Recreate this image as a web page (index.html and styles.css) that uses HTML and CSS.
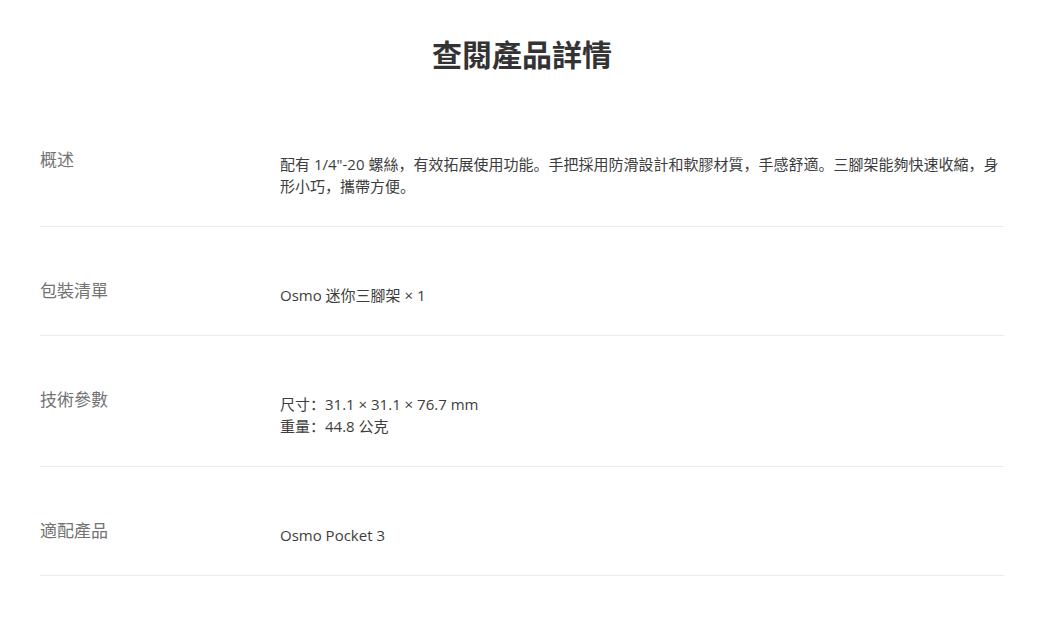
FILE: index.html
```html
<!DOCTYPE html>
<html>
<head>
  <meta charset="UTF-8" />
  <title>查閱產品詳情</title>
  <meta name="viewport" content="width=device-width, initial-scale=1.0" />
  <link rel="stylesheet" href="styles.css">
</head>
<body>

<div class="container">
  <!-- Encabezado -->
  <div class="header">
    <h1>查閱產品詳情</h1>
  </div>

  <!-- Detalles -->
  <div class="specs">
    <div class="row">
      <div class="label">概述</div>
      <div class="value">配有 1/4"-20 螺絲，有效拓展使用功能。手把採用防滑設計和軟膠材質，手感舒適。三腳架能夠快速收縮，身形小巧，攜帶方便。</div>
    </div>

    <div class="row">
      <div class="label">包裝清單</div>
      <div class="value">Osmo 迷你三腳架 × 1</div>
    </div>

    <div class="row">
      <div class="label">技術參數</div>
      <div class="value">
        尺寸：31.1 × 31.1 × 76.7 mm<br>
        重量：44.8 公克
      </div>
    </div>

    <div class="row">
      <div class="label">適配產品</div>
      <div class="value">Osmo Pocket 3</div>
    </div>
  </div>
</div>

</body>
</html>
```

FILE: styles.css
```css
body {
  background: #fff;
  font-family: 'Open Sans', 'Noto Sans CJK SC', sans-serif;
  margin: 0;
  padding: 0;
}

.container {
  padding: 0 36px 0 40px;
}

.header {
  padding: 35px 0 21px;
}

h1 {
  margin: 0;
  text-align: center;
  font-size: 30px;
  line-height: 40px;
  font-weight: bold;
  color: #333;
}

.row {
  display: grid;
  grid-template-columns: 240px 1fr;
  padding: 52px 0 29px;
  border-bottom: 1px solid #ebebeb;
}

.label {
  font-size: 17px;
  line-height: 24px;
  color: #737373;
}

.value {
  padding-top: 5px;
  font-size: 15px;
  line-height: 22px;
  color: #3d3d3d;
}
```
